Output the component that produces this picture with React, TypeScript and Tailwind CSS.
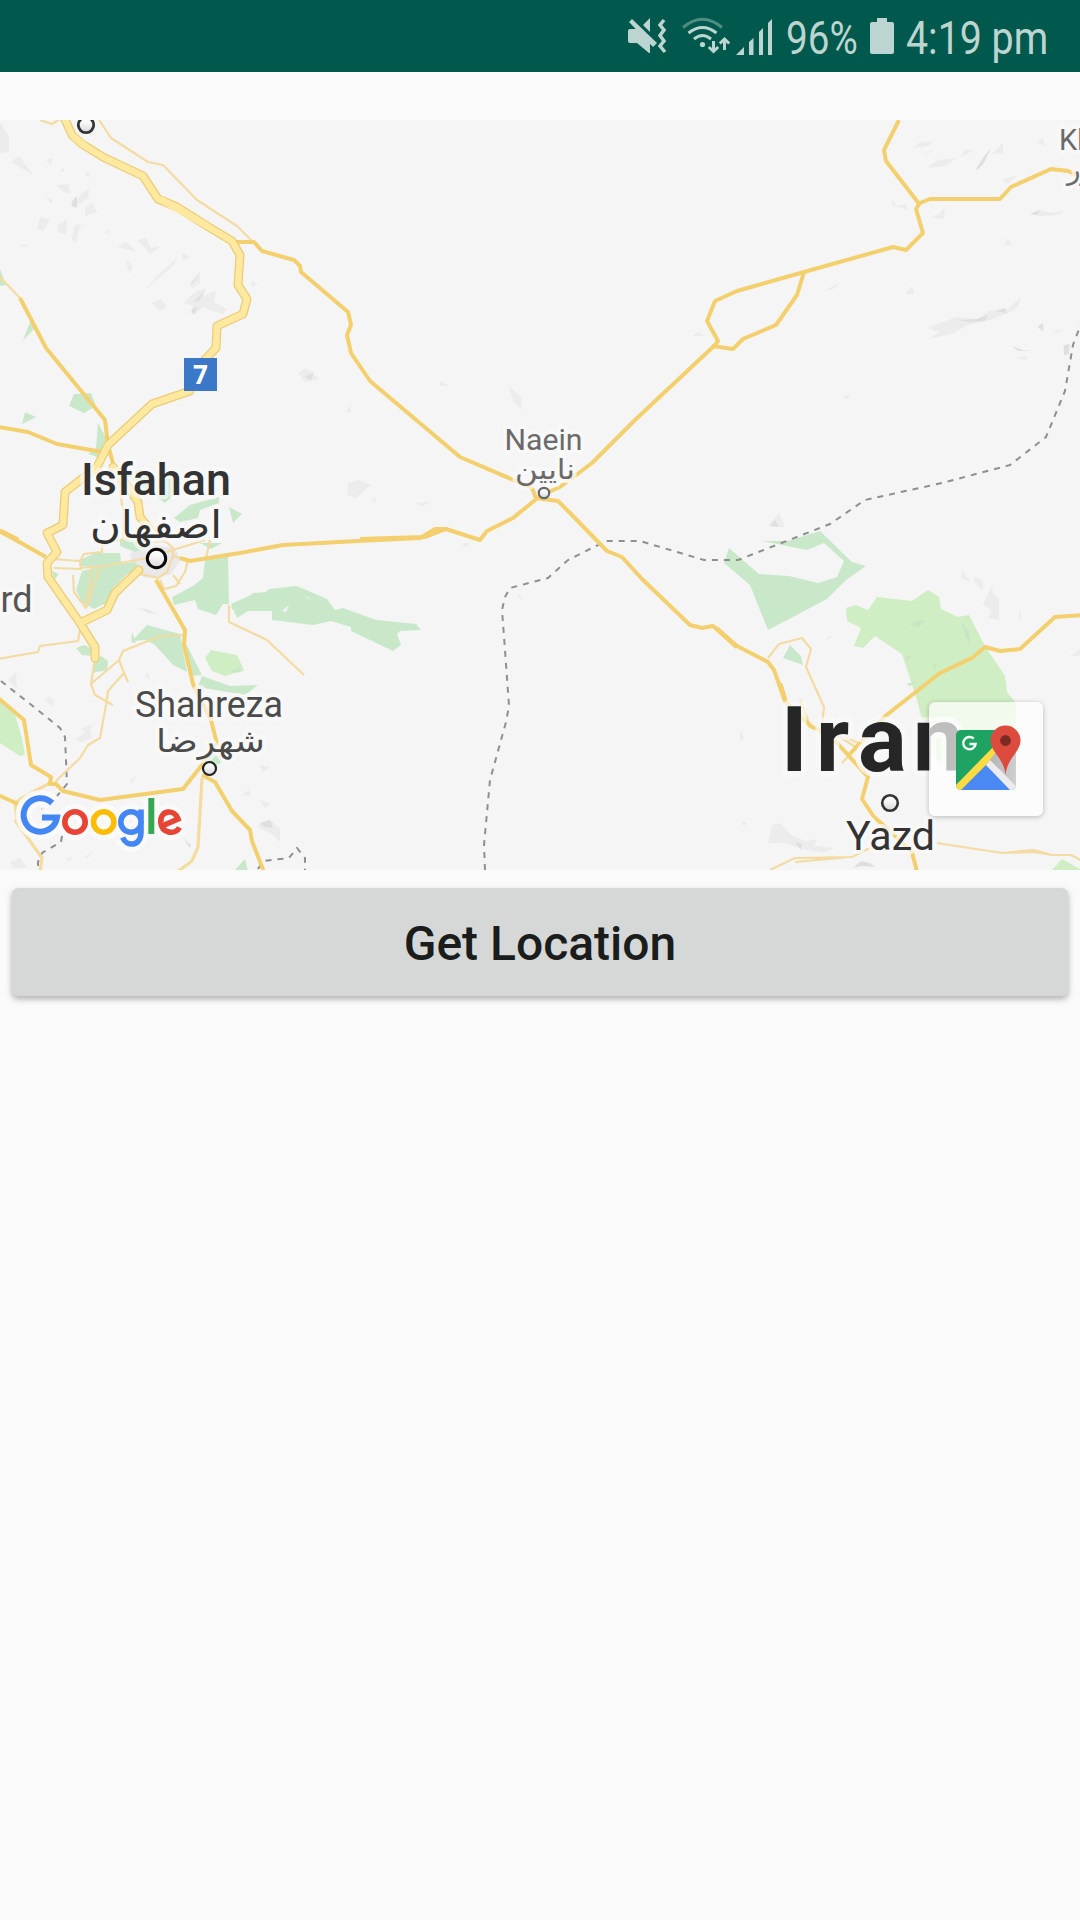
import React from "react";

const minorRoads = [
  "M40 120L52 124L60 119",
  "M99 120L111 138L148 162L163 165L197 200L237 226L253 242",
  "M-2 275L20 298",
  "M-2 659L38 652L40 646L78 641L80 630L82 623",
  "M52 559L80 561L81 569L54 568M80 561L84 554L102 552L102 546L112 542L128 538M80 568L105 566L142 559L160 554L205 540M141 543L165 541L173 548L173 556L167 572L158 578L140 574M173 548L173 556L188 560L185 572L176 586L164 589L160 580M173 575L180 584M100 568L86 608L74 592L73 575M92 567L86 607M118 480L123 510L123 540",
  "M210 540L206 558",
  "M95 658L91 684L119 660L123 651L148 641L162 636L184 635M119 660L124 673L128 682M91 684L95 695L113 705M124 673L108 691L106 705L100 738L88 745L80 758L57 780L55 784",
  "M229 605L229 622L267 640L304 675",
  "M768 658L779 644L802 638L811 649L806 667L824 707L822 724L820 735",
  "M845 737L860 744L842 763M820 724L857 748",
  "M770 870L795 858L852 857L868 849L881 847M795 862L851 857",
  "M937 843L1002 853L1034 850L1052 855L1071 855L1084 862M1002 853L1034 852L1052 855",
];
const lightRoads = [
  "M17 821L15 803L22 798L50 783",
  "M15 820L42 858L40 872",
  "M202 778L198 847L192 861L177 872",
  "M800 700L810 727",
];
const mainRoads = [
  "M236 242L254 242L262 251L294 260L300 266L301 272L348 312L351 325L347 335L351 353L370 381L460 457L532 488L536 498L558 501L570 513L607 551L622 557L642 579L690 625L702 628L713 626L737 646L768 662L774 670L785 701",
  "M20 298L46 348L105 420L108 445",
  "M-2 427L28 432L57 444L102 452",
  "M-2 530L46 557",
  "M108 445L114 467",
  "M180 558L190 561L240 553L283 545L358 541L420 538L446 529L480 540L487 531L513 518L540 496L560 487L592 463L635 420L715 345L718 341L707 321L715 301L737 291L804 272L893 247L906 250L923 233L916 209L920 203L930 199L1000 199L1011 187L1051 169L1068 171L1084 178",
  "M360 539L422 537L435 529L446 529",
  "M712 346L733 349L743 339L776 325L797 295L804 272",
  "M899 120L884 150L886 161L920 205",
  "M156 580L185 630L184 645L193 684L211 720L217 744L208 755L202 765L183 789L100 800L63 791L56 784L50 784L51 777L31 765L24 720L-2 698",
  "M202 775L215 782L232 811L250 830L252 841L264 872",
  "M-2 795L18 804",
  "M780 684L785 701L798 714L812 727L822 731L838 744L868 777L862 799L874 817L890 831L912 852L917 872",
  "M848 756L884 717L940 673L972 658L985 647L1000 651L1020 649L1055 617L1084 615",
];
const motorways = [
  "M64 117L72 135L82 144L103 157L143 176L158 199L177 207L207 226L232 241L240 255L238 285L247 299L243 314L217 326L216 348L200 365",
  "M190 391L152 404L108 445L97 467L65 492L63 525L47 533L57 552L47 563L48 577L80 623L95 647L95 658",
  "M80 623L107 610L115 593L139 570",
  "M113 467L128 487L138 502L140 517L153 533",
];
const greens = [
  "M0 269L6 285L0 286ZM31 320L35 328L23 340ZM74 394L91 393L96 406L84 413L69 406ZM25 412L36 417L22 424ZM98 423L106 438L100 458L88 454L96 448Z",
  "M126 475L140 469L150 480L180 478L177 492L165 503L150 492ZM174 518L190 505L219 497L219 503L200 510L198 518L180 522ZM229 507L242 514L233 523ZM120 540L140 536L150 546L135 552L120 546ZM200 543L222 543L211 549Z",
  "M82 559L95 553L120 553L121 562L100 567L80 566ZM82 571L98 567L135 562L141 568L126 575L113 588L108 602L94 609L82 602L76 590ZM52 571L59 574L54 580Z",
  "M190 561L228 556L229 604L223 604L216 615L198 609L195 600L174 605L172 597L193 586L203 578L205 560Z",
  "M231 604L251 595L253 593L266 592L269 589L297 586L327 599L335 610L343 608L376 620L416 624L421 630L400 631L397 634L401 645L393 651L351 631L351 627L331 621L313 625L272 620L272 611L248 611L237 618Z",
  "M147 625L180 634L187 672L173 665L155 645L146 640L132 641ZM132 632L136 643L131 642ZM182 636L202 675L190 676ZM202 676L230 686L258 685L245 695L198 687ZM76 648L84 645L95 650L94 656L82 655ZM101 656L108 661L107 670L92 673L95 660ZM235 602L240 615L231 608Z",
  "M205 758L220 752L222 762L215 766ZM245 859L248 871L234 871Z",
  "M729 548L759 574L789 576L818 583L837 577L844 561L824 543L807 550L762 541L788 541L820 531L852 562L866 566L846 580L827 599L768 630L750 585L724 563ZM790 645L801 656L803 665L783 658Z",
];
const limes = [
  "M211 650L237 655L244 670L225 676L212 671L205 658Z",
  "M-2 701L14 711L22 738L25 755L20 756L-2 742Z",
  "M846 608L856 605L868 610L877 597L912 601L928 590L939 597L941 609L958 617L969 615L985 646L1005 676L1007 692L1016 703L1015 740L990 765L955 780L930 750L917 700L902 654L875 636L863 648L854 646L861 628L847 621Z",
  "M1062 859L1082 870L1050 872Z",
];
const hills = [
  "M0 122L9 137L9 152L0 153ZM11 162L19 156L33 175ZM46 160L53 158L51 165ZM56 185L68 184L70 194L62 191ZM59 170L65 168L63 173ZM46 196L53 200L51 204ZM40 217L50 220L43 231L37 228ZM58 225L67 220L66 235L57 232ZM74 225L81 224L76 243L72 240ZM85 208L92 203L97 212L85 216ZM80 195L89 188L88 198L74 207ZM86 170L91 177L85 176ZM18 246L24 244L29 247ZM105 232L111 229L107 234ZM117 247L126 242L137 252ZM138 240L146 238L151 248L161 246L150 254ZM126 260L133 266L129 274ZM144 291L157 276L176 259L174 265ZM182 252L190 257L183 261ZM189 285L200 271L200 283L193 288ZM183 303L195 292L206 288L203 296L216 291L214 302L227 309L222 314L203 307L197 313L191 314L193 306ZM151 303L161 299L167 306L160 311ZM252 280L258 285L251 286ZM298 373L306 368L319 379L305 382Z",
  "M348 483L359 480L371 485L356 498L347 495ZM371 501L376 497L375 503ZM413 503L432 502L422 506ZM461 544L469 543L467 547ZM346 413L350 405L351 412ZM508 385L521 397L522 410L514 402ZM516 593L521 595L523 602ZM440 381L450 386L440 386Z",
  "M908 154L920 142L933 141L928 146L915 148ZM923 155L937 148L927 154ZM927 168L938 160L956 158L946 166ZM960 157L966 149L973 151ZM992 154L1003 143L1003 153ZM1002 180L1017 175L1008 184ZM892 200L897 206L905 204L909 210L892 205ZM931 217L939 214L945 207L944 218L938 219ZM1038 143L1043 138L1045 146ZM1030 214L1040 210L1052 213L1066 210L1058 215L1040 216ZM1004 245L1008 238L1011 245ZM905 294L912 286L914 294ZM823 291L840 283L833 289ZM926 328L943 322L956 317L977 319L989 311L1008 309L1021 297L1018 307L1006 314L990 320L968 325L952 334L928 339L940 332ZM1037 327L1043 322L1044 332ZM1052 333L1065 328L1057 333ZM1063 345L1070 343L1070 354L1064 356ZM1015 358L1028 356L1026 360ZM693 336L698 332L705 336ZM843 397L850 394L847 399Z",
  "M769 525L779 513L785 528ZM962 570L971 582L961 578ZM974 577L983 580L983 590L975 584ZM983 604L993 583L992 592L999 599L999 620L988 618L991 610ZM1019 610L1022 617L1019 621ZM825 641L830 635L832 637ZM1070 656L1082 647L1082 656Z",
  "M138 607L150 613L160 615L149 614ZM55 590L67 610L60 604ZM8 680L16 672L17 689ZM45 700L49 696L55 702L51 706ZM75 740L90 728L92 738L82 742ZM80 730L92 724L90 732ZM259 765L270 767L263 772ZM260 800L270 803L265 809ZM242 794L249 790L252 797ZM258 825L270 819L280 829L280 842L272 834L259 828ZM130 780L136 775L132 784ZM145 675L148 672L150 680ZM10 862L20 858L27 868L13 868ZM65 860L73 856L70 861ZM85 857L94 850L88 858Z",
  "M740 730L744 738L740 742ZM742 820L747 824L743 826ZM768 843L772 825L780 823L791 835L805 841L817 839L814 846L834 848L824 853L806 850L784 843Z",
];
const darkHills = [
  "M73 200L77 196L77 208L71 206ZM141 236L152 228L145 233ZM190 284L199 274L193 283ZM193 302L204 292L200 300ZM191 310L198 306L194 315ZM305 377L314 372L311 380Z",
  "M976 169L985 155L991 148L985 161L978 170ZM958 320L977 319L988 315L985 321L970 322ZM995 311L1005 308L1007 313ZM1030 214L1040 210L1037 215ZM1012 346L1023 350L1034 350L1018 351ZM1038 327L1043 323L1043 331ZM1064 346L1069 344L1068 354L1064 355Z",
  "M770 526L775 520L779 527ZM138 608L148 610L159 615ZM260 823L270 820L273 828L264 827ZM795 842L802 844L801 850ZM183 838L191 845L190 848ZM853 868L861 861L870 863L875 867L862 866Z",
];
const ARABIC = '"DejaVu Sans", sans-serif';

type LabelProps = {
  x: number | string;
  y: number;
  size: number;
  width?: number;
  color: string;
  weight?: number;
  arabic?: boolean;
  halo?: number;
  children: string;
};

function Label({ x, y, size, width, color, weight = 400, arabic, halo = 8, children }: LabelProps) {
  return (
    <text
      x={x}
      y={y}
      fontSize={size}
      fontWeight={weight}
      fill={color}
      stroke="#fafafa"
      strokeOpacity={0.7}
      strokeWidth={halo}
      strokeLinejoin="round"
      paintOrder="stroke"
      fontFamily={arabic ? ARABIC : "Roboto, sans-serif"}
      {...(width ? { textLength: width, lengthAdjust: "spacingAndGlyphs" } : {})}
    >
      {children}
    </text>
  );
}

function Dot({ x, y, r, w, c }: { x: number; y: number; r: number; w: number; c: string }) {
  return <circle cx={x} cy={y} r={r} fill="url(#dot)" stroke={c} strokeWidth={w} />;
}

const logoParts = [
  { color: "#4486f4", width: 6, d: "M52.200 803A16.800 16.800 0 1 0 57 817.500H42" },
  { color: "#e64435", width: 5.6, d: "M64.800 822a10.200 10.200 0 1 0 20.400 0a10.200 10.200 0 1 0 -20.400 0" },
  { color: "#fbbd06", width: 5.6, d: "M93.500 822a10.200 10.200 0 1 0 20.400 0a10.200 10.200 0 1 0 -20.400 0" },
  { color: "#4486f4", width: 5.6, d: "M120.800 822a10.200 10.200 0 1 0 20.400 0a10.200 10.200 0 1 0 -20.400 0M141 809.500V832C141 847 126.500 847 122.700 837.500" },
  { color: "#37a852", width: 6, d: "M151.300 798V834" },
  { color: "#e64435", width: 5.6, d: "M162 826L178 819C174.500 809 159.800 809.500 160.800 822.500C162 834 175.500 835 179.500 827.500" },
];

function GoogleLogo() {
  return (
    <g fill="none" role="img" aria-label="Google">
      <path
        d={logoParts.map((p) => p.d).join("")}
        stroke="#fafafa"
        strokeOpacity="0.85"
        strokeWidth="16"
        strokeLinejoin="round"
      />
      {logoParts.map((p) => (
        <path key={p.d} d={p.d} stroke={p.color} strokeWidth={p.width} />
      ))}
    </g>
  );
}

function RoadMap() {
  return (
    <svg className="block h-[750px] w-[1080px]" viewBox="0 120 1080 750">
      <defs>
        <linearGradient id="dot" x1="0" y1="0" x2="0" y2="1">
          <stop offset="0.3" stopColor="#fafafa" />
          <stop offset="1" stopColor="#d8d8d8" />
        </linearGradient>
      </defs>
      <rect y="120" width="1080" height="750" fill="#f5f5f5" />
      <path d={hills.join("")} fill="#ececec" />
      <path d={darkHills.join("")} fill="#dfdfdf" />
      <path d="M130 553L150 545L175 548L181 560L170 575L145 578L133 567Z" fill="#e9e9e9" />
      <path d={greens.join("")} fill="#c8e8c9" />
      <path d={limes.join("")} fill="#d0eec3" />
      <path
        d="M910 625L919 620L925 620L919 627ZM962 623L969 631L970 643L966 638ZM905 658L912 655L908 660ZM933 665L937 663L935 670ZM906 684L918 681L910 686ZM231 671L238 668L243 671L236 673Z"
        fill="#c6e6c4"
      />
      <path d="M282 611L289 605L286 612ZM305 596L313 600L307 598Z" fill="#f5f5f5" />
      <g fill="none" stroke="#8f8f8f" strokeWidth="2" strokeDasharray="6 6">
        <path d="M485 870L484 845L490 780L506 722L509 706L505 650L502 610L505 597L510 588L548 578L568 560L606 541L640 541L704 560L738 560L830 524L865 500L942 483L1010 465L1046 437L1065 391L1073 345L1084 316" />
        <path d="M1 681L34 707L60 728L65 737L67 784L57 796M62 836L61 842L42 853L38 862L38 872M258 869L263 861L289 858L297 848L305 858L305 872" />
      </g>
      <path d="M42 808L48 825" fill="none" stroke="#d5d5d5" strokeWidth="2" />
      <g fill="none" strokeLinejoin="round">
        <path d={minorRoads.join("")} stroke="#f3dba2" strokeWidth="2.2" />
        <path d={lightRoads.join("")} stroke="#f4dc9e" strokeWidth="3.2" />
        <path d={mainRoads.join("")} stroke="#f3d06d" strokeWidth="4" />
        <g strokeLinecap="round">
          <path d={motorways.join("")} stroke="#ebcd76" strokeWidth="9" />
          <path d={motorways.join("")} stroke="#ffe9a1" strokeWidth="6.4" />
        </g>
        <path d="M74 137L84 145M160 199L183 212L207 226" stroke="#ffe9a1" strokeWidth="7" />
        <path d="M424 537L443 529M716 628L737 647M780 684L785 700M0 531L18 540" stroke="#f3d06d" strokeWidth="5" />
      </g>
      <rect x="184" y="358" width="33" height="33" fill="#3b78c8" />
      <text x="200.5" y="383.500" textAnchor="middle" fontSize="26" fontWeight="700" fill="#fff" fontFamily='"Noto Sans", sans-serif'>
        7
      </text>
      <Dot x={86} y={125} r={7.7} w={2.8} c="#333" />
      <Label x={81} y={494.700} size={45} width={150} weight={500} color="#333">Isfahan</Label>
      <Label x={90} y={538} size={38} width={132} color="#333" arabic>اصفهان</Label>
      <Dot x={156.500} y={558.500} r={9.200} w={3} c="#0a0a0a" />
      <Label x={0.500} y={612} size={36} color="#555">rd</Label>
      <Label x={135} y={716.500} size={36} width={148} color="#4b4b4b">Shahreza</Label>
      <Label x={156} y={752} size={32} width={109} color="#4b4b4b" arabic>شهرضا</Label>
      <Dot x={209.500} y={768.500} r={6.500} w={2.200} c="#222" />
      <Label x={504.500} y={449.500} size={29} width={78} color="#6a6a6a">Naein</Label>
      <Label x={515} y={479} size={28} width={60} color="#6a6a6a" arabic>نایین</Label>
      <Dot x={544} y={493} r={5.200} w={2.200} c="#666" />
      <Label x={1059} y={149.500} size={29} color="#6a6a6a">Kh</Label>
      <Label x={1067} y={179} size={28} color="#6a6a6a" arabic>ور</Label>
      <Label x="781 816 858 913" y={770.700} size={91} weight={700} color="#262626" halo={11}>Iran</Label>
      <Dot x={890} y={803} r={7.800} w={2.600} c="#333" />
      <Label x={846} y={850} size={40} width={89} color="#333">Yazd</Label>
      <GoogleLogo />
    </svg>
  );
}

function MapsIcon() {
  return (
    <svg className="h-[70px] w-[70px]" viewBox="952 722 70 70">
      <defs>
        <clipPath id="tile">
          <rect x="956" y="730" width="60" height="60" rx="5" />
        </clipPath>
        <linearGradient id="shade">
          <stop offset="0" stopColor="#b0b0b0" />
          <stop offset="1" stopColor="#cfcfcf" />
        </linearGradient>
      </defs>
      <g clipPath="url(#tile)">
        <rect x="956" y="730" width="60" height="60" fill="#1ea362" />
        <path d="M986 760L1016 730V790H986Z" fill="url(#shade)" />
        <path d="M961 790L986 765L1011 790Z" fill="#4a89f3" />
        <path d="M986 765L990 760L1020 790H1010Z" fill="#ececee" />
        <path d="M954 787L996 744V752L986 765L960 791H954Z" fill="#fddb47" />
      </g>
      <path d="M973.800 738.700A6.200 6.200 0 1 0 975.600 744H969.500" fill="none" stroke="#f1faf5" strokeWidth="2.500" />
      <path d="M1005.500 775C1004 758 990.500 752 990.500 740.500A15 15 0 0 1 1020.500 740.500C1020.500 752 1007 758 1005.500 775Z" fill="#dc4b3e" />
      <circle cx="1005.500" cy="740.500" r="5.400" fill="#7d2a25" />
    </svg>
  );
}

function MuteIcon() {
  return (
    <svg className="h-[38px] w-10" viewBox="627 17 40 38" fill="#bdd5d0">
      <path d="M630 29H637L650 41V53H649L637 43H630Q628 43 628 41V31Q628 29 630 29ZM643 25L650 18V32ZM629 22L632 19L657 43L653 47Z" />
      <path d="M664 20L660 25L664 30L660 35.500L664 41L660 46L665 52" fill="none" stroke="#bdd5d0" strokeWidth="3.500" />
    </svg>
  );
}

function WifiIcon() {
  return (
    <svg className="h-[38px] w-12" viewBox="682 16 48 38" fill="none" stroke="#bdd5d0" strokeWidth="3">
      <path d="M683 26.500Q702.500 10 722 26.500" stroke="#4f8c81" />
      <path d="M688.500 32Q702.500 21 716.500 32M694 38Q702.500 31 711 38" />
      <circle cx="702.500" cy="43.500" r="2.600" fill="#bdd5d0" stroke="none" />
      <path d="M713.500 40V50M708.800 46L713.500 50.500L718.200 46M724.500 49V39M719.800 42.500L724.500 38L729.200 42.500" />
    </svg>
  );
}

function SignalIcon() {
  return (
    <svg className="h-[37px] w-9" viewBox="736 16 36 37" fill="#bdd5d0">
      <path d="M736 53L744 45V53ZM749 40L753.500 36V53H749ZM759 30L763 26V53H759ZM768 21L772 17V53H768Z" />
    </svg>
  );
}

function BatteryIcon() {
  return (
    <svg className="h-9 w-6" viewBox="0 0 24 36" fill="#bdd5d0">
      <path d="M7 0H17V4H22Q24 4 24 6V34Q24 36 22 36H2Q0 36 0 34V6Q0 4 2 4H7Z" />
    </svg>
  );
}

function StatusBar() {
  return (
    <header className="flex h-[72px] w-full items-center justify-end bg-[#00594c] pr-[32px] font-[Roboto,sans-serif] text-[46px] leading-[54px] text-[#bdd5d0]">
      <MuteIcon />
      <div className="ml-[15px]"><WifiIcon /></div>
      <div className="ml-[6px]"><SignalIcon /></div>
      <div className="ml-[14px] w-[72px] pt-1">
        <span className="inline-block origin-left scale-x-[0.84] whitespace-nowrap">96%</span>
      </div>
      <div className="ml-[12px]"><BatteryIcon /></div>
      <div className="ml-[12px] w-[142px] pt-1">
        <span className="inline-block origin-left scale-x-[0.855] whitespace-nowrap">4:19 pm</span>
      </div>
    </header>
  );
}

export default function App() {
  return (
    <div className="flex h-[1920px] w-[1080px] flex-col overflow-hidden bg-[#fafafa]">
      <StatusBar />
      <main className="flex flex-col pt-12">
        <div className="relative h-[750px] overflow-hidden">
          <RoadMap />
          <button className="absolute right-[37px] bottom-[54px] flex h-[114px] w-[114px] rounded-md bg-white/70 pt-[20px] pl-[23px] shadow-[0_1px_5px_rgba(0,0,0,0.25)]">
            <MapsIcon />
          </button>
        </div>
        <div className="px-3 pt-[18px]">
          <button className="flex h-[108px] w-full items-center justify-center rounded-md bg-[#d6d8d7] pt-[3px] font-[Roboto,sans-serif] text-[48px] font-medium text-[#1b1c1c] shadow-[0_3px_6px_rgba(0,0,0,0.3)]">
            Get Location
          </button>
        </div>
      </main>
    </div>
  );
}
